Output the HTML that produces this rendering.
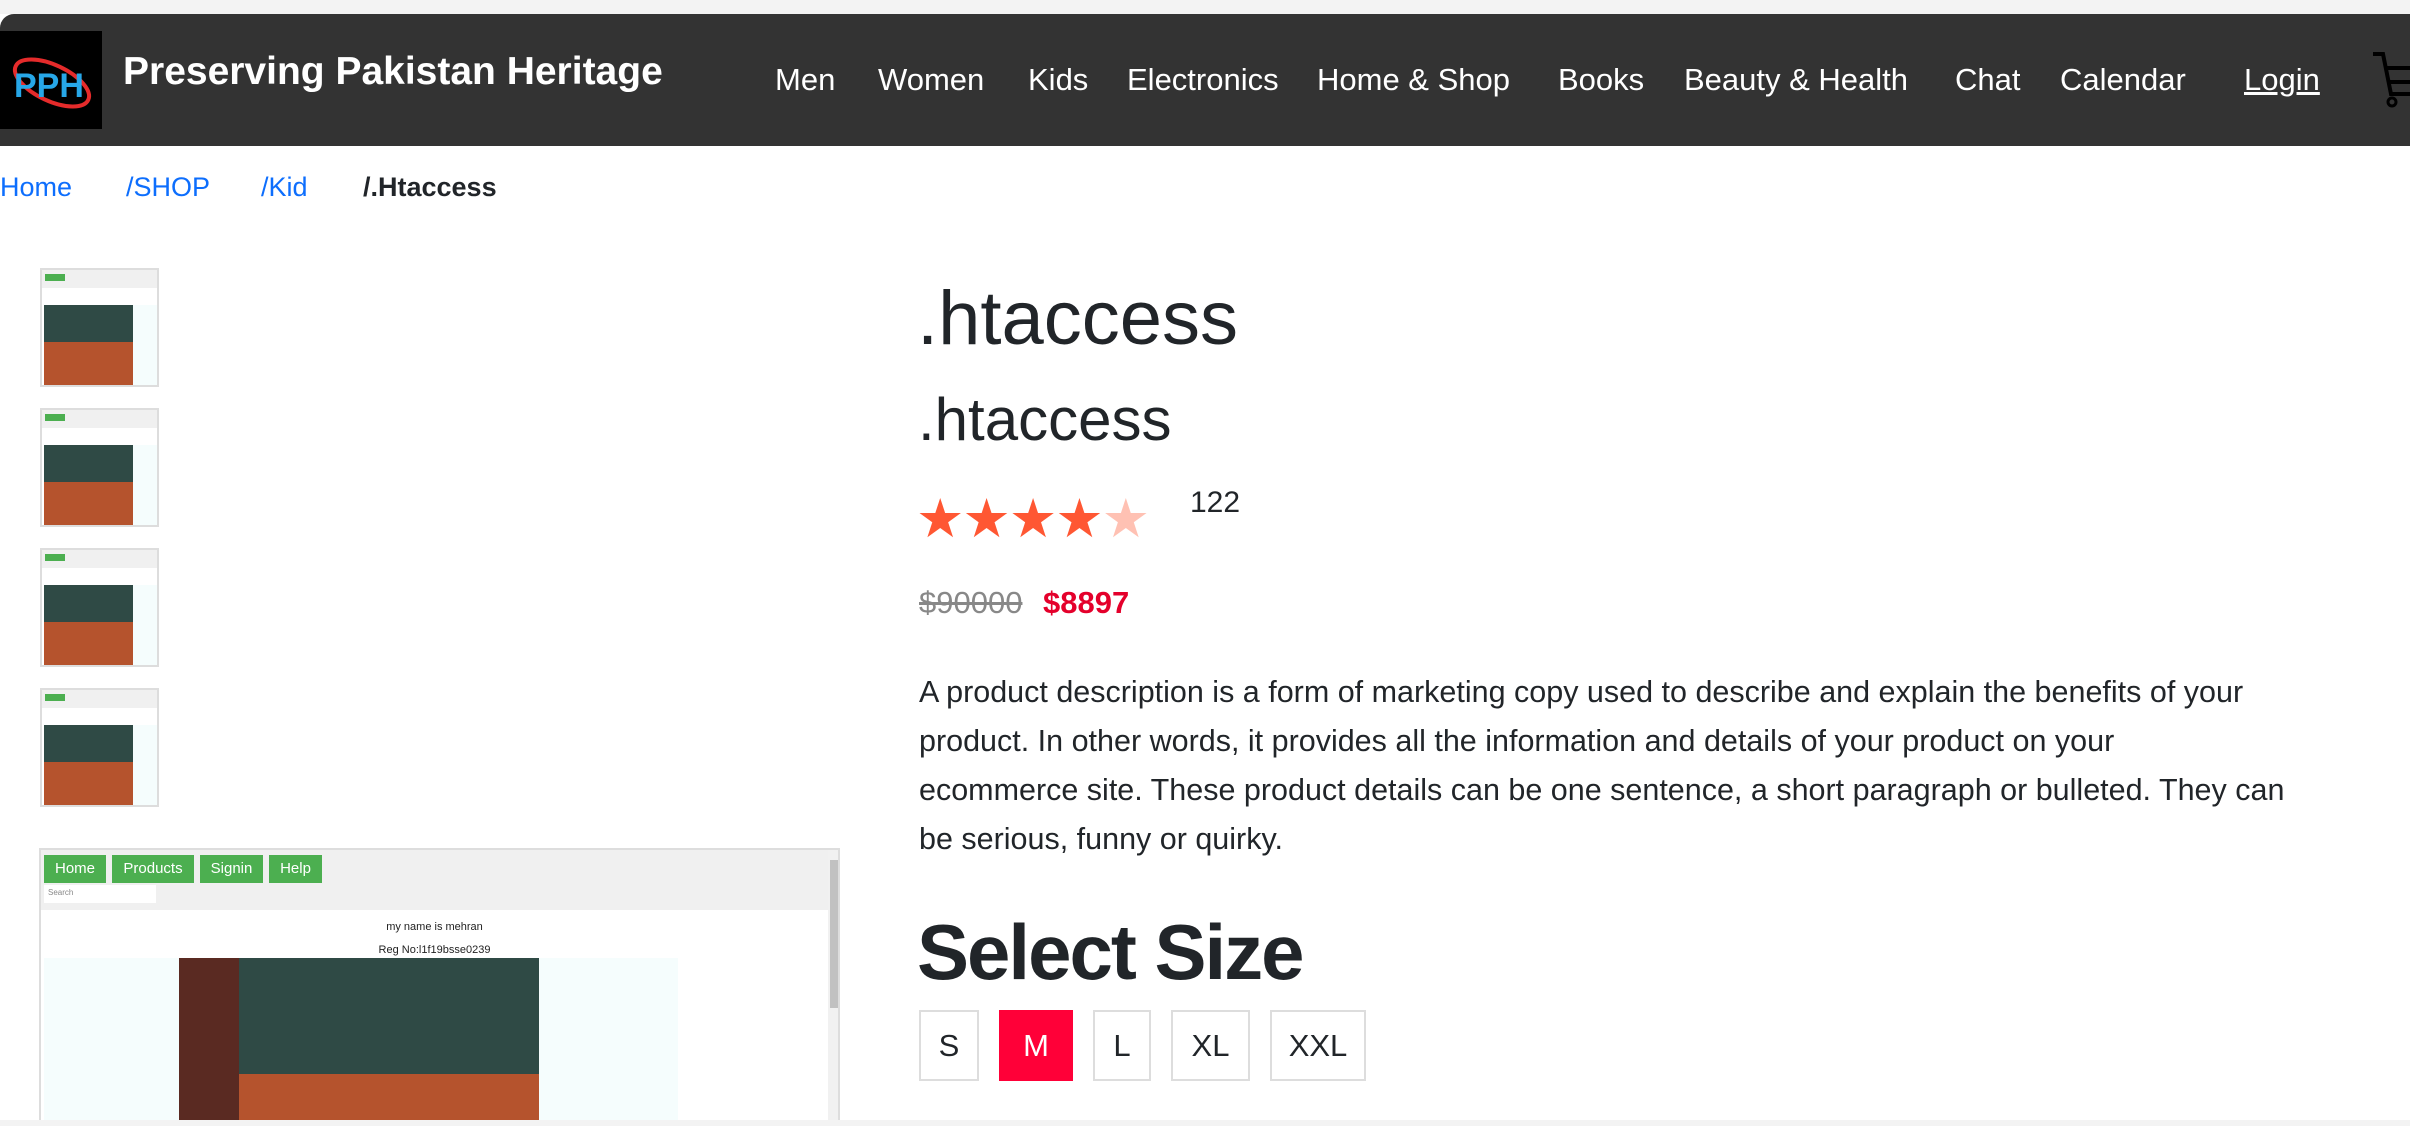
<!DOCTYPE html>
<html><head><meta charset="utf-8"><style>
*{margin:0;padding:0;box-sizing:border-box}
body{width:2410px;height:1126px;overflow:hidden;background:#fff;font-family:"Liberation Sans",sans-serif;color:#212529;position:relative}
.abs{position:absolute}
.top{left:0;top:0;width:2410px;height:14px;background:#f3f3f3}
.nav{left:0;top:14px;width:2410px;height:132px;background:#333;border-top-left-radius:14px}
.logo{left:0;top:31px;width:102px;height:98px;background:#000}
.title{left:123px;top:50px;color:#fff;font-weight:bold;font-size:39px;white-space:nowrap}
.ni{top:62px;color:#fff;font-size:31px;white-space:nowrap}
.bc{top:172px;font-size:27px;color:#0d6efd;white-space:nowrap}
.th{left:40px;width:119px;height:119px;border:2px solid #ddd;background:#fff;overflow:hidden}
.th .h{position:absolute;left:0;top:0;width:100%;height:18px;background:#f0f0f0}
.th .g{position:absolute;left:3px;top:4px;width:20px;height:7px;background:#4caf50}
.th .p{position:absolute;left:2px;top:35px;width:89px;height:82px;background:linear-gradient(180deg,#2f4a45 0,#2f4a45 45%,#b5532d 45%,#b5532d 100%)}
.th .c{position:absolute;left:91px;top:35px;width:26px;height:82px;background:#f5fdfd}
.btn{top:855px;height:28px;background:#4caf50;color:#fff;font-size:15px;line-height:28px;text-align:center}
.sz{top:1010px;height:71px;border:2px solid #ddd;font-size:31px;line-height:67px;text-align:center;color:#212529}
</style></head><body>
<div class="abs top"></div>
<div class="abs nav"></div>
<div class="abs logo">
<svg width="102" height="98" viewBox="0 0 102 98">
<ellipse cx="52" cy="52" rx="40" ry="18" transform="rotate(25 52 52)" fill="none" stroke="#e52b2b" stroke-width="4"/>
<text x="14" y="66" font-family="Liberation Sans" font-weight="bold" font-size="34" fill="#27a7e8">PPH</text>
</svg></div>
<div class="abs title">Preserving Pakistan Heritage</div>
<div class="abs ni" style="left:775px">Men</div>
<div class="abs ni" style="left:878px">Women</div>
<div class="abs ni" style="left:1028px">Kids</div>
<div class="abs ni" style="left:1127px">Electronics</div>
<div class="abs ni" style="left:1317px">Home &amp; Shop</div>
<div class="abs ni" style="left:1558px">Books</div>
<div class="abs ni" style="left:1684px">Beauty &amp; Health</div>
<div class="abs ni" style="left:1955px">Chat</div>
<div class="abs ni" style="left:2060px">Calendar</div>
<div class="abs ni" style="left:2244px;text-decoration:underline">Login</div>
<svg class="abs" style="left:2370px;top:50px" width="40" height="60" viewBox="0 0 40 60"><path d="M3 4h10l8 40h19M16 18h24M18 32h22" fill="none" stroke="#000" stroke-width="4"/><circle cx="22" cy="52" r="4" fill="none" stroke="#000" stroke-width="3"/></svg>
<div class="abs bc" style="left:0">Home</div>
<div class="abs bc" style="left:126px">/SHOP</div>
<div class="abs bc" style="left:261px">/Kid</div>
<div class="abs bc" style="left:363px;color:#212529;font-weight:bold">/.Htaccess</div>
<div class="abs th" style="top:268px"><div class="h"></div><div class="g"></div><div class="p"></div><div class="c"></div></div>
<div class="abs th" style="top:408px"><div class="h"></div><div class="g"></div><div class="p"></div><div class="c"></div></div>
<div class="abs th" style="top:548px"><div class="h"></div><div class="g"></div><div class="p"></div><div class="c"></div></div>
<div class="abs th" style="top:688px"><div class="h"></div><div class="g"></div><div class="p"></div><div class="c"></div></div>
<div class="abs" style="left:39px;top:848px;width:801px;height:278px;border:2px solid #ddd;background:#fff;overflow:hidden">
<div class="abs" style="left:0;top:0;width:787px;height:60px;background:#f0f0f0"></div>
<div class="abs" style="left:3px;top:108px;width:634px;height:200px;background:#f5fdfd"></div>
<div class="abs" style="left:138px;top:108px;width:360px;height:200px;background:linear-gradient(180deg,#2f4a45 0,#2f4a45 58%,#b5532d 58%)"></div>
<div class="abs" style="left:138px;top:108px;width:60px;height:200px;background:#5a2a22"></div>
<div class="abs" style="left:0;top:71px;width:787px;text-align:center;font-size:11px;color:#222">my name is mehran</div>
<div class="abs" style="left:0;top:94px;width:787px;text-align:center;font-size:11px;color:#222">Reg No:l1f19bsse0239</div>
<div class="abs" style="left:787px;top:0;width:12px;height:278px;background:#f1f1f1"></div>
<div class="abs" style="left:789px;top:10px;width:8px;height:148px;background:#c1c1c1"></div>
</div>
<div class="abs btn" style="left:44px;width:62px">Home</div>
<div class="abs btn" style="left:112px;width:82px">Products</div>
<div class="abs btn" style="left:200px;width:63px">Signin</div>
<div class="abs btn" style="left:269px;width:53px">Help</div>
<div class="abs" style="left:44px;top:885px;width:112px;height:18px;background:#fff;font-size:8px;color:#888;padding:3px 4px">Search</div>
<div class="abs" style="left:917px;top:275px;font-size:76px;white-space:nowrap">.htaccess</div>
<div class="abs" style="left:918px;top:385px;font-size:60px;white-space:nowrap">.htaccess</div>
<div class="abs" style="left:916px;top:487px;font-size:54px;color:#ff5733;letter-spacing:-2px;white-space:nowrap">★★★★<span style="color:#ffc1b3">★</span></div>
<div class="abs" style="left:1190px;top:486px;font-size:30px;white-space:nowrap">122</div>
<div class="abs" style="left:919px;top:585px;font-size:31px;color:#888;text-decoration:line-through">$90000</div>
<div class="abs" style="left:1043px;top:585px;font-size:31px;color:#e4002b;font-weight:bold">$8897</div>
<div class="abs" style="left:919px;top:668px;font-size:30.5px;line-height:49px;white-space:nowrap;color:#212529">A product description is a form of marketing copy used to describe and explain the benefits of your<br>product. In other words, it provides all the information and details of your product on your<br>ecommerce site. These product details can be one sentence, a short paragraph or bulleted. They can<br>be serious, funny or quirky.</div>
<div class="abs" style="left:917px;top:907px;font-size:78px;font-weight:bold;white-space:nowrap;letter-spacing:-2px">Select Size</div>
<div class="abs sz" style="left:919px;width:60px">S</div>
<div class="abs sz" style="left:999px;width:74px;background:#ff0038;border-color:#ff0038;color:#fff">M</div>
<div class="abs sz" style="left:1093px;width:58px">L</div>
<div class="abs sz" style="left:1171px;width:79px">XL</div>
<div class="abs sz" style="left:1270px;width:96px">XXL</div>
<div class="abs" style="left:0;top:1120px;width:2410px;height:6px;background:#f3f3f3"></div>
</body></html>
